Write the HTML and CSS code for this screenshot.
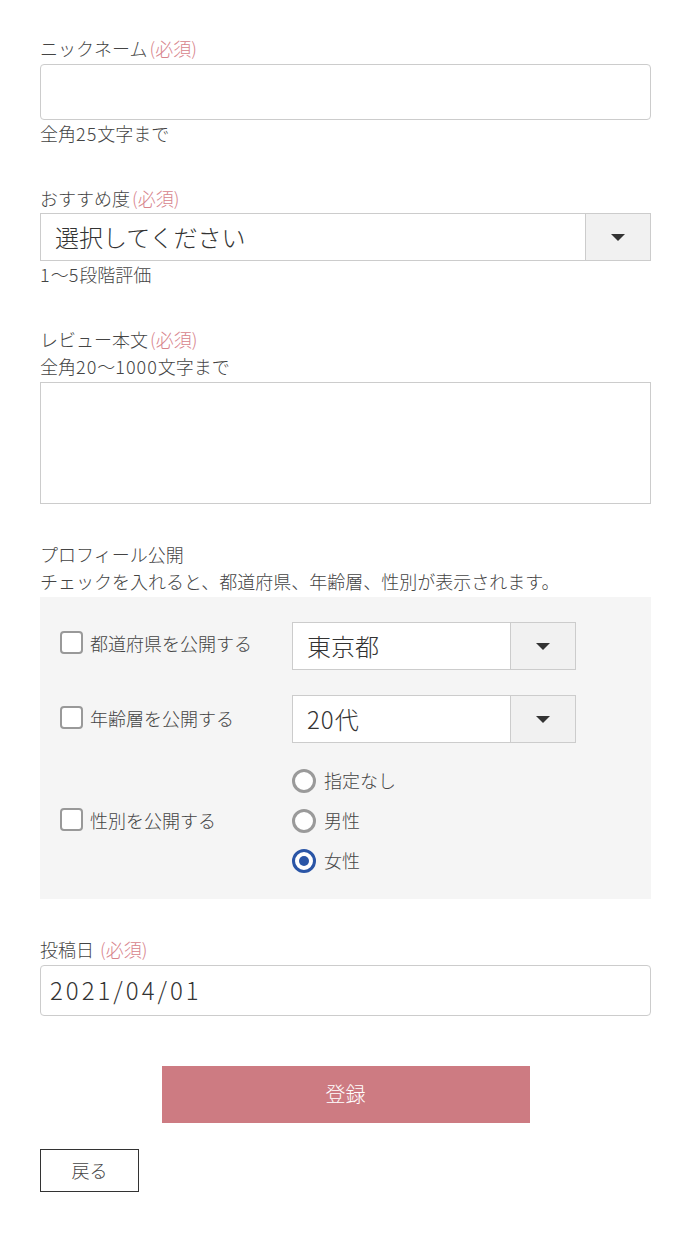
FILE: index.html
```html
<!DOCTYPE html>
<html lang="ja">
<head>
<meta charset="utf-8">
<title>レビュー投稿</title>
<link rel="stylesheet" href="styles.css">
</head>
<body>
<form class="form">
  <div class="field field-first">
    <div class="label">ニックネーム<span class="req">(必須)</span></div>
    <div class="input input-nick"></div>
    <div class="note">全角<span class="num">25</span>文字まで</div>
  </div>

  <div class="field">
    <div class="label">おすすめ度<span class="req">(必須)</span></div>
    <div class="select select-wide">
      <div class="select-value">選択してください</div>
      <div class="select-arrow"><span class="tri"></span></div>
    </div>
    <div class="note"><span class="num">1</span>〜<span class="num">5</span>段階評価</div>
  </div>

  <div class="field">
    <div class="label">レビュー本文<span class="req">(必須)</span></div>
    <div class="label label-sub">全角<span class="num">20</span>〜<span class="num">1000</span>文字まで</div>
    <div class="textarea"></div>
  </div>

  <div class="field field-profile">
    <div class="label">プロフィール公開</div>
    <div class="label label-sub">チェックを入れると、都道府県、年齢層、性別が表示されます。</div>
    <div class="panel">
      <div class="prow">
        <div class="check"><span class="box"></span><span class="check-text">都道府県を公開する</span></div>
        <div class="select select-small">
          <div class="select-value">東京都</div>
          <div class="select-arrow"><span class="tri"></span></div>
        </div>
      </div>
      <div class="prow">
        <div class="check"><span class="box"></span><span class="check-text">年齢層を公開する</span></div>
        <div class="select select-small">
          <div class="select-value"><span class="num">20</span>代</div>
          <div class="select-arrow"><span class="tri"></span></div>
        </div>
      </div>
      <div class="prow prow-radio">
        <div class="check"><span class="box"></span><span class="check-text">性別を公開する</span></div>
        <div class="radios">
          <div class="radio"><span class="circle"></span><span class="radio-text">指定なし</span></div>
          <div class="radio"><span class="circle"></span><span class="radio-text">男性</span></div>
          <div class="radio"><span class="circle checked"></span><span class="radio-text">女性</span></div>
        </div>
      </div>
    </div>
  </div>

  <div class="field field-date">
    <div class="label">投稿日 <span class="req">(必須)</span></div>
    <div class="input input-date">2021/04/01</div>
  </div>

  <div class="actions">
    <div class="btn-submit">登録</div>
  </div>
  <div class="back-wrap">
    <div class="btn-back">戻る</div>
  </div>
</form>
</body>
</html>
```

FILE: styles.css
```css
html, body {
  margin: 0;
  padding: 0;
  background: #ffffff;
}
body {
  font-family: "Noto Sans CJK JP", "Noto Sans", sans-serif;
  font-weight: 300;
  color: #444444;
  font-size: 18px;
}
.form {
  width: 611px;
  padding: 35px 0 40px 40px;
}
.num {
  letter-spacing: 1px;
}
.field {
  margin-top: 39px;
}
.field-first {
  margin-top: 0;
}
.field-profile {
  margin-top: 37px;
}
.field-date {
  margin-top: 37px;
}
.label {
  line-height: 26px;
  height: 26px;
  margin-bottom: 3px;
  white-space: nowrap;
}
.label-sub {
  margin-top: -2px;
}
.req {
  color: #d7848c;
  margin-left: 2px;
}
.note {
  line-height: 26px;
  height: 26px;
}
.input {
  box-sizing: border-box;
  width: 611px;
  border: 1px solid #cccccc;
  border-radius: 4px;
  background: #fff;
}
.input-nick {
  height: 56px;
}
.input-date {
  height: 51px;
  line-height: 47px;
  padding-left: 9px;
  font-size: 24px;
  color: #333333;
  letter-spacing: 3px;
}
.select {
  box-sizing: border-box;
  display: flex;
  height: 48px;
  border: 1px solid #cccccc;
  background: #ffffff;
}
.select-wide {
  width: 611px;
  margin-top: -1px;
}
.select-small {
  width: 284px;
}
.select-value {
  flex: 1;
  padding-left: 14px;
  font-size: 24px;
  line-height: 46px;
  color: #333333;
}
.select-arrow {
  width: 64px;
  border-left: 1px solid #cccccc;
  background: #f1f1f1;
  display: flex;
  align-items: center;
  justify-content: center;
}
.tri {
  width: 0;
  height: 0;
  border-left: 7px solid transparent;
  border-right: 7px solid transparent;
  border-top: 7px solid #333333;
}
.textarea {
  box-sizing: border-box;
  width: 611px;
  height: 122px;
  border: 1px solid #cccccc;
  background: #fff;
}
.panel {
  box-sizing: border-box;
  width: 611px;
  background: #f5f5f5;
  padding: 25px 20px 26px 20px;
  display: flex;
  flex-direction: column;
  gap: 25px;
}
.prow {
  display: flex;
  align-items: center;
}
.prow-radio {
  margin-top: 1px;
}
.check {
  width: 232px;
  display: flex;
  align-items: center;
  gap: 7px;
  margin-top: -7px;
}
.prow + .prow .check {
  margin-top: -3px;
}
.prow-radio .check {
  margin-top: -6px;
}
.box {
  box-sizing: border-box;
  width: 23px;
  height: 23px;
  border: 2px solid #999999;
  border-radius: 4px;
  background: #ffffff;
}
.check-text {
  line-height: 24px;
}
.radios {
  display: flex;
  flex-direction: column;
  gap: 16px;
}
.radio {
  display: flex;
  align-items: center;
  gap: 8px;
  height: 24px;
}
.circle {
  box-sizing: border-box;
  width: 24px;
  height: 24px;
  border: 3px solid #9a9a9a;
  border-radius: 50%;
  background: #ffffff;
  display: flex;
  align-items: center;
  justify-content: center;
}
.circle.checked {
  border-color: #2a55a6;
}
.circle.checked::after {
  content: "";
  width: 10px;
  height: 10px;
  border-radius: 50%;
  background: #2a55a6;
}
.radio-text {
  line-height: 24px;
  margin-top: -2px;
}
.actions {
  display: flex;
  justify-content: center;
  margin-top: 50px;
}
.btn-submit {
  width: 368px;
  height: 57px;
  background: #cd7b82;
  color: #ffffff;
  font-size: 20px;
  line-height: 55px;
  text-align: center;
}
.back-wrap {
  margin-top: 26px;
}
.btn-back {
  box-sizing: border-box;
  width: 99px;
  height: 43px;
  border: 1px solid #333333;
  line-height: 40px;
  text-align: center;
  color: #444444;
  background: #fff;
}
```
